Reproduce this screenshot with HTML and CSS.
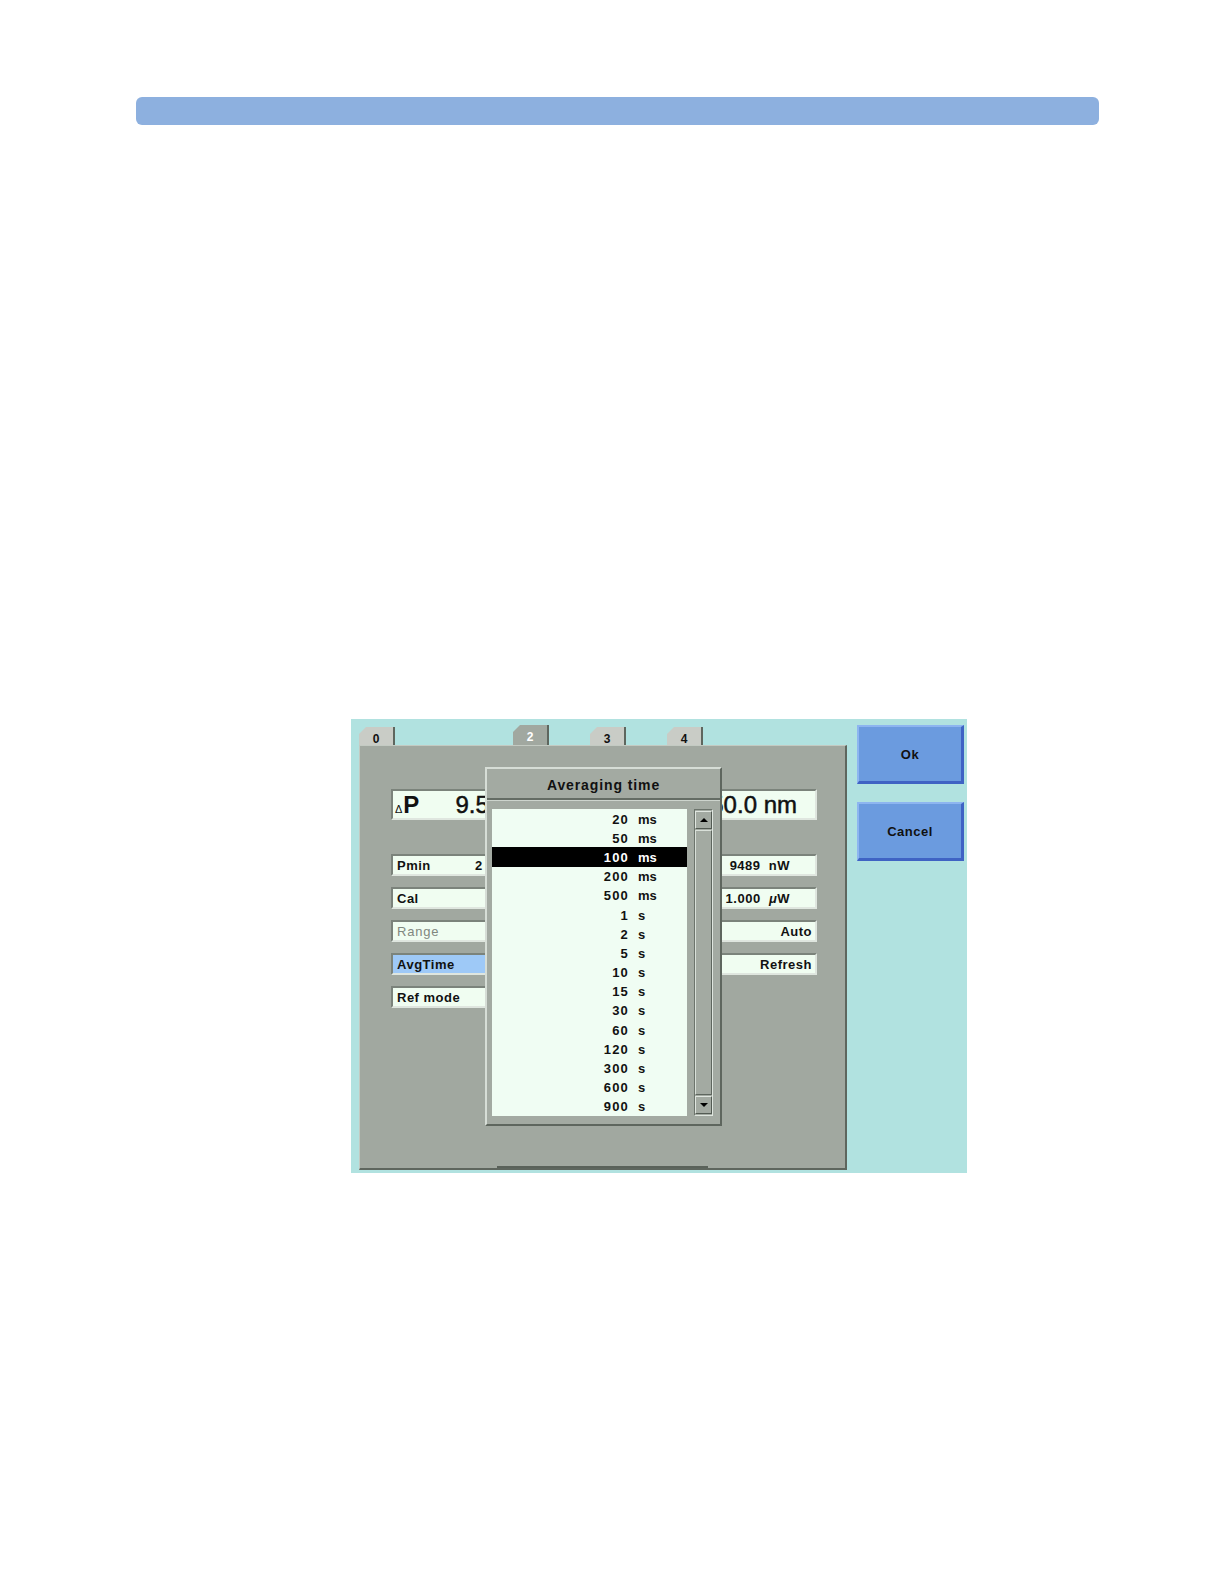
FILE: index.html
```html
<!DOCTYPE html>
<html>
<head>
<meta charset="utf-8">
<title>Averaging time</title>
<link rel="stylesheet" href="styles.css">
</head>
<body>
<div class="topbar"></div>
<div class="shot">
  <div class="main">
    <div class="tabs">
      <div class="tab-slot"><div class="tab">0</div></div>
      <div class="tab-slot"></div>
      <div class="tab-slot"><div class="tab active">2</div></div>
      <div class="tab-slot"><div class="tab">3</div></div>
      <div class="tab-slot"><div class="tab">4</div></div>
    </div>
    <div class="panel">
      <div class="bigfield">
        <span class="delta">&#916;</span><span class="bigP">P</span><span class="bigval">9.5</span>
        <span class="bigright">550.0 nm</span>
      </div>
      <div class="rows">
        <div class="fld lft"><span class="lbl">Pmin</span><span>2</span></div>
        <div class="fld rgt"><span class="unitval">9489&nbsp;&nbsp;nW</span></div>
        <div class="fld lft"><span class="lbl">Cal</span></div>
        <div class="fld rgt"><span class="unitval">1.000&nbsp;&nbsp;<i>&#956;</i>W</span></div>
        <div class="fld lft"><span class="lbl disabled">Range</span></div>
        <div class="fld rgt"><span>Auto</span></div>
        <div class="fld lft sel"><span class="lbl">AvgTime</span></div>
        <div class="fld rgt"><span>Refresh</span></div>
        <div class="fld lft"><span class="lbl">Ref mode</span></div>
        <div class="empty"></div>
      </div>
      <div class="tabline"></div>
      <div class="popup">
        <div class="popup-head">Averaging time</div>
        <div class="popup-body">
          <div class="list">
            <div class="item"><span class="num">20</span><span class="unit">ms</span></div>
            <div class="item"><span class="num">50</span><span class="unit">ms</span></div>
            <div class="item current"><span class="num">100</span><span class="unit">ms</span></div>
            <div class="item"><span class="num">200</span><span class="unit">ms</span></div>
            <div class="item"><span class="num">500</span><span class="unit">ms</span></div>
            <div class="item"><span class="num">1</span><span class="unit">s</span></div>
            <div class="item"><span class="num">2</span><span class="unit">s</span></div>
            <div class="item"><span class="num">5</span><span class="unit">s</span></div>
            <div class="item"><span class="num">10</span><span class="unit">s</span></div>
            <div class="item"><span class="num">15</span><span class="unit">s</span></div>
            <div class="item"><span class="num">30</span><span class="unit">s</span></div>
            <div class="item"><span class="num">60</span><span class="unit">s</span></div>
            <div class="item"><span class="num">120</span><span class="unit">s</span></div>
            <div class="item"><span class="num">300</span><span class="unit">s</span></div>
            <div class="item"><span class="num">600</span><span class="unit">s</span></div>
            <div class="item"><span class="num">900</span><span class="unit">s</span></div>
          </div>
          <div class="scroll">
            <div class="sbtn"><span class="arrow up"></span></div>
            <div class="thumb"></div>
            <div class="sbtn"><span class="arrow down"></span></div>
          </div>
        </div>
      </div>
    </div>
  </div>
  <div class="buttons">
    <div class="btn">Ok</div>
    <div class="btn">Cancel</div>
  </div>
</div>
</body>
</html>
```

FILE: styles.css
```css
* { box-sizing: border-box; }

body {
  margin: 0;
  background: #ffffff;
  font-family: "Liberation Sans", Arial, sans-serif;
  color: #111;
}

.topbar {
  margin: 97px 0 0 136px;
  width: 963px;
  height: 28px;
  background: #8db0df;
  border-radius: 6px;
}

.shot {
  margin: 594px 0 0 351px;
  width: 616px;
  height: 454px;
  background: #b1e2e0;
  display: flex;
  align-items: flex-start;
}

.main {
  width: 496px;
  padding-left: 8px;
  display: flex;
  flex-direction: column;
}

/* tabs */
.tabs {
  height: 26px;
  display: flex;
  align-items: flex-end;
}
.tab-slot {
  width: 77px;
  height: 100%;
  display: flex;
  align-items: flex-end;
}
.tab {
  width: 36px;
  height: 18px;
  background: #c9ccc6;
  border-right: 2px solid #5e665e;
  clip-path: polygon(7px 0, 100% 0, 100% 100%, 0 100%, 0 7px);
  font-weight: 700;
  font-size: 12px;
  display: flex;
  align-items: center;
  justify-content: center;
  padding-top: 5px;
  color: #111;
}
.tab.active {
  height: 20px;
  background: #a1a8a0;
  color: #ffffff;
  padding-top: 3px;
}

/* main panel */
.panel {
  position: relative;
  height: 425px;
  background: #a1a8a0;
  border-top: 1px solid #c3cac2;
  border-left: 1px solid #c3cac2;
  border-right: 2px solid #5e665e;
  border-bottom: 2px solid #5e665e;
  padding: 43px 28px 0 31px;
  display: flex;
  flex-direction: column;
}

.bigfield {
  height: 31px;
  background: #f0fdf1;
  border-style: solid;
  border-width: 2px;
  border-color: #7b837b #dfe6df #dfe6df #7b837b;
  display: flex;
  align-items: center;
  padding: 0 18px 0 2px;
  font-size: 24px;
  -webkit-text-stroke: 0.5px #111;
}
.delta {
  font-size: 11px;
  margin-top: 9px;
  -webkit-text-stroke: 0;
}
.bigP {
  margin-left: 1px;
  font-weight: 700;
  -webkit-text-stroke: 0;
}
.bigval {
  margin-left: 36px;
}
.bigright {
  margin-left: auto;
}

.rows {
  margin-top: 34px;
  display: grid;
  grid-template-columns: 1fr 1fr;
  column-gap: 10px;
  row-gap: 11px;
}
.fld {
  height: 22px;
  background: #f0fdf1;
  border-style: solid;
  border-width: 2px;
  border-color: #7b837b #dfe6df #dfe6df #7b837b;
  display: flex;
  align-items: center;
  font-size: 13px;
  font-weight: 700;
  letter-spacing: 0.5px;
}
.fld.lft { padding-left: 4px; }
.fld.rgt { justify-content: flex-end; padding-right: 3px; }
.fld.sel { background: #9ec9f7; }
.lbl { width: 78px; display: inline-block; }
.lbl.disabled { color: #80877f; font-weight: 400; letter-spacing: 0.8px; }
.unitval { padding-right: 22px; }
.unitval i { font-weight: 700; }
.empty { height: 22px; }

.tabline {
  margin-top: auto;
  margin-left: 106px;
  width: 211px;
  height: 2px;
  background: #5a625a;
}

/* popup */
.popup {
  position: absolute;
  left: 125px;
  top: 21px;
  width: 237px;
  height: 359px;
  background: #a3aaa2;
  border-style: solid;
  border-width: 2px;
  border-color: #d6ddd6 #5e665e #5e665e #d6ddd6;
  display: flex;
  flex-direction: column;
}
.popup-head {
  height: 31px;
  flex: none;
  border-bottom: 2px solid #646c64;
  box-shadow: 0 1px 0 #cdd4cd;
  display: flex;
  align-items: center;
  justify-content: center;
  font-weight: 700;
  font-size: 14px;
  letter-spacing: 0.9px;
  padding-top: 2px;
}
.popup-body {
  flex: 1;
  display: flex;
  gap: 7px;
  padding: 9px 7px 0 5px;
}
.list {
  width: 195px;
  height: 307.2px;
  background: #f0fdf3;
  display: flex;
  flex-direction: column;
}
.item {
  height: 19.2px;
  display: flex;
  align-items: center;
  font-size: 13px;
  font-weight: 700;
  padding-top: 1px;
}
.item.current {
  background: #000;
  color: #fff;
}
.num {
  width: 137px;
  text-align: right;
  letter-spacing: 1.2px;
}
.unit {
  margin-left: 9px;
}

.scroll {
  width: 19px;
  height: 307px;
  border-style: solid;
  border-width: 1px;
  border-color: #6c746c #dfe6df #dfe6df #6c746c;
  display: flex;
  flex-direction: column;
  padding: 1px 0;
}
.sbtn {
  height: 18px;
  flex: none;
  background: #a3aaa2;
  border-style: solid;
  border-width: 1px;
  border-color: #e0e6e0 #535b53 #535b53 #e0e6e0;
  display: flex;
  align-items: center;
  justify-content: center;
}
.arrow {
  width: 0;
  height: 0;
  border-left: 4px solid transparent;
  border-right: 4px solid transparent;
}
.arrow.up { border-bottom: 4px solid #000; }
.arrow.down { border-top: 4px solid #000; }
.thumb {
  flex: 1;
  margin: 1px 0;
  border-style: solid;
  border-width: 1px;
  border-color: #d9e0d9 #5e665e #5e665e #d9e0d9;
}

/* buttons */
.buttons {
  margin-left: 10px;
  width: 107px;
  padding-top: 6px;
  display: flex;
  flex-direction: column;
  gap: 18px;
}
.btn {
  height: 59px;
  background: #6b9bdf;
  border-style: solid;
  border-width: 2px 3px 3px 2px;
  border-color: #8db5f0 #3f63c4 #3f63c4 #8db5f0;
  display: flex;
  align-items: center;
  justify-content: center;
  font-size: 13px;
  font-weight: 700;
  letter-spacing: 0.5px;
}
```
